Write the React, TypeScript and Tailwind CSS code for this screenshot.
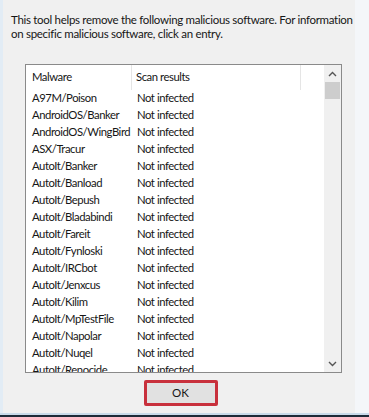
import React from "react";

const rows = [
  "A97M/Poison",
  "AndroidOS/Banker",
  "AndroidOS/WingBird",
  "ASX/Tracur",
  "AutoIt/Banker",
  "AutoIt/Banload",
  "AutoIt/Bepush",
  "AutoIt/Bladabindi",
  "AutoIt/Fareit",
  "AutoIt/Fynloski",
  "AutoIt/IRCbot",
  "AutoIt/Jenxcus",
  "AutoIt/Kilim",
  "AutoIt/MpTestFile",
  "AutoIt/Napolar",
  "AutoIt/Nuqel",
  "AutoIt/Renocide",
];

export default function App() {
  return (
    <div
      className="w-[369px] h-[417px] flex flex-col bg-[#f0f0f0] overflow-hidden text-[#161616]"
      style={{ fontFamily: 'Lato, "Noto Sans", sans-serif' }}
    >
      <div className="flex flex-1 min-h-0">
        <div className="w-[3px] bg-[#e2ecf5]" />
        <div className="w-[352px] flex flex-col">
          <p className="pl-[8px] pt-[13px] text-[11.5px] leading-[14px] tracking-[-0.3px] whitespace-nowrap">
            This tool helps remove the following malicious software. For information
            <br />
            on specific malicious software, click an entry.
          </p>
          <div className="mt-[23px] ml-[22px] w-[317px] h-[309px] shrink-0 border border-[#8a8a8a] bg-white flex">
            <div className="flex-1 flex flex-col overflow-hidden text-[11.3px] tracking-[-0.45px]">
              <div className="h-[25px] flex shrink-0 items-center">
                <div className="w-[106px] h-full flex items-center pl-[6px] border-r border-[#e5e5e5]">Malware</div>
                <div className="w-[169px] h-full flex items-center pl-[4px] border-r border-[#e5e5e5]">Scan results</div>
              </div>
              {rows.map((r) => (
                <div key={r} className="h-[17px] flex shrink-0 items-center">
                  <div className="w-[106px] shrink-0 pl-[6px] whitespace-nowrap">{r}</div>
                  <div className="pl-[5px] whitespace-nowrap">Not infected</div>
                </div>
              ))}
            </div>
            <div className="w-[17px] flex flex-col bg-[#f0f0f0]">
              <div className="h-[17px] flex items-center justify-center">
                <svg width="9" height="6" viewBox="0 0 9 6">
                  <path d="M1 5 L4.5 1.5 L8 5" fill="none" stroke="#555" strokeWidth="1.4" />
                </svg>
              </div>
              <div className="mx-[1px] h-[17px] bg-[#cdcdcd]" />
              <div className="flex-1" />
              <div className="h-[17px] flex items-center justify-center">
                <svg width="9" height="6" viewBox="0 0 9 6">
                  <path d="M1 1 L4.5 4.5 L8 1" fill="none" stroke="#555" strokeWidth="1.4" />
                </svg>
              </div>
            </div>
          </div>
          <div className="mt-[7px] flex justify-center pl-[3px]">
            <div className="w-[74px] h-[26px] border-[3px] border-[#c8303c] rounded-[2px] bg-[#e1e1e1] flex items-center justify-center text-[11.5px]">
              OK
            </div>
          </div>
        </div>
        <div className="flex-1 bg-[#f4f6f9]" />
      </div>
      <div className="h-[2px] bg-[#c9dbea]" />
      <div className="h-[2px] bg-[#1d2b38]" />
    </div>
  );
}
